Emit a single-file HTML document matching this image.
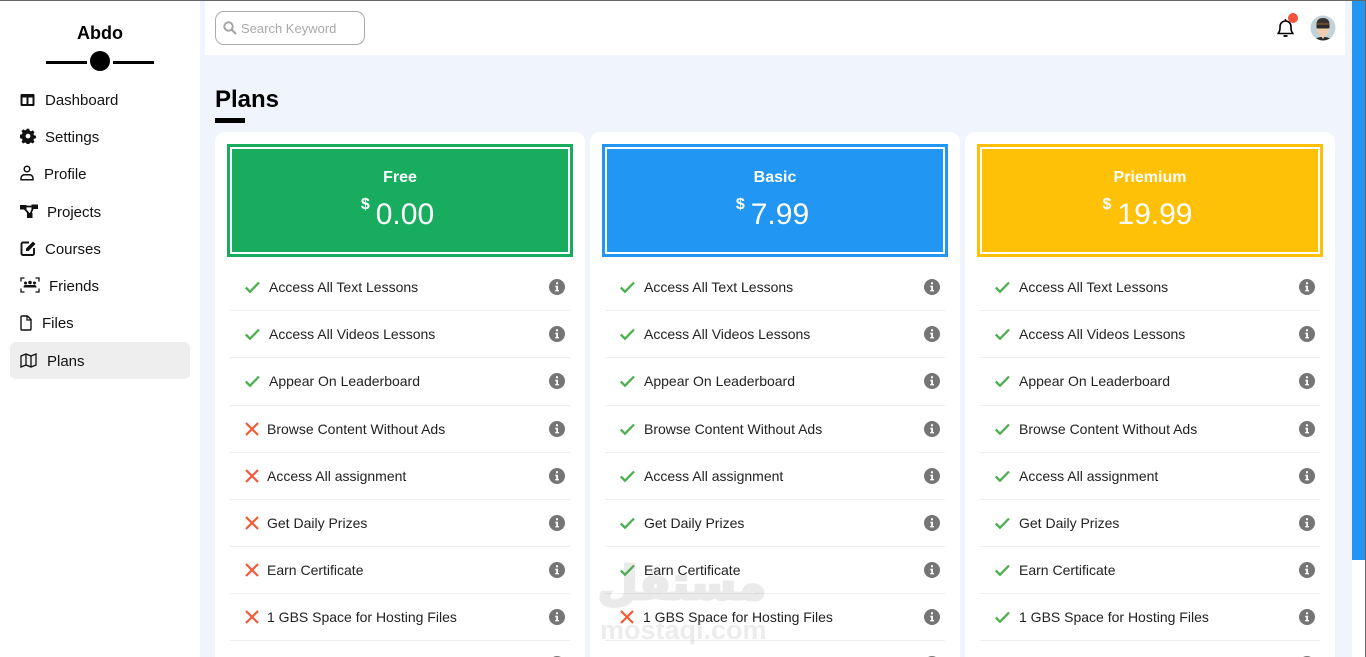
<!DOCTYPE html>
<html><head><meta charset="utf-8"><title>Plans</title>
<style>
*{box-sizing:border-box}
html,body{margin:0;padding:0;width:1366px;height:657px;overflow:hidden}
body{position:relative;background:#f0f4fd;font-family:"Liberation Sans",sans-serif;color:#111}
.a{position:absolute}
.nav{position:absolute;font-size:15px;line-height:18px;white-space:nowrap;color:#111}
.ni{position:absolute;left:20px}
.card{position:absolute;top:132px;width:370px;height:525px;background:#fff;border-radius:10px 10px 0 0;overflow:hidden}
.head{position:absolute;left:12px;top:12px;width:346px;height:113px;border:3px solid}
.head i{position:absolute;left:0;top:0;right:0;bottom:0;border:2px solid #fff;display:block}
.t{position:absolute;left:0;width:100%;top:21px;text-align:center;color:#fff;font-weight:bold;font-size:16px;line-height:20px}
.p{position:absolute;left:0;width:100%;top:50px;padding-right:5px;text-align:center;color:#fff;font-size:30px;line-height:36px;white-space:nowrap}
.p sup{font-size:16px;font-weight:bold;position:relative;top:-15px;vertical-align:baseline;margin-right:6px;line-height:0}
.sep{position:absolute;left:15px;width:340px;height:1px;background:#eee}
.r{position:absolute;font-size:14px;line-height:18px;white-space:nowrap;color:#222}
.ic{position:absolute;left:29px;width:16px;height:16px}
.in{position:absolute;left:334px;width:16px;height:16px}
</style></head><body>
<svg width="0" height="0" style="position:absolute">
<symbol id="ck" viewBox="0 0 16 16"><path d="M1.800 8.500 6 12.700 15 3.500" fill="none" stroke="#4caf50" stroke-width="2.300"/></symbol>
<symbol id="xx" viewBox="0 0 16 16"><path d="M2 2 14 14M14 2 2 14" fill="none" stroke="#f4593a" stroke-width="2.200"/></symbol>
<symbol id="inf" viewBox="0 0 16 16"><circle cx="8" cy="8" r="8" fill="#757575"/><path d="M7 3.200h2v2H7zM6.300 6.800H9v4.200h1v1.400H6.200V11h1V8.200h-.9z" fill="#fff"/></symbol>
</svg>

<!-- sidebar -->
<div class="a" style="left:0;top:0;width:200px;height:657px;background:#fff"></div>
<div class="a" style="left:0;top:23px;width:200px;text-align:center;font-weight:bold;font-size:18px;line-height:21px;color:#000">Abdo</div>
<div class="a" style="left:46px;top:61px;width:41px;height:3px;background:#000"></div>
<div class="a" style="left:113px;top:61px;width:41px;height:3px;background:#000"></div>
<div class="a" style="left:90px;top:51px;width:20px;height:20px;border-radius:50%;background:#000"></div>
<div class="a" style="left:10px;top:342px;width:180px;height:37px;background:#eee;border-radius:6px"></div>

<svg class="ni" style="top:92px" width="16" height="16" viewBox="0 0 16 16"><path d="M1.500 2h12a1 1 0 0 1 1 1v10a1 1 0 0 1-1 1h-12a1 1 0 0 1-1-1V3a1 1 0 0 1 1-1zM2.500 5.500v6.500h4V5.500zM8.500 5.500v6.500h4V5.500z" fill="#111" fill-rule="evenodd"/></svg>
<div class="nav" style="left:45px;top:92px">Dashboard</div>
<svg class="ni" style="top:128px" width="16" height="16" viewBox="0 0 16 16"><path d="M6.800.8h2.400l.5 2 1.300.6 1.800-1 1.700 1.700-1 1.800.5 1.300 2 .5v2.500l-2 .5-.5 1.300 1 1.800-1.700 1.700-1.800-1-1.300.5-.5 2H6.800l-.5-2-1.300-.5-1.800 1-1.700-1.700 1-1.800-.5-1.300-2-.5V6.700l2-.5.500-1.300-1-1.800 1.700-1.700 1.800 1 1.300-.6zM8 5.700a2.400 2.400 0 1 0 0 4.800 2.400 2.400 0 0 0 0-4.800z" fill="#111" fill-rule="evenodd"/></svg>
<div class="nav" style="left:45px;top:129px">Settings</div>
<svg class="ni" style="top:165px" width="14" height="16" viewBox="0 0 14 16"><circle cx="7" cy="4" r="2.800" fill="none" stroke="#111" stroke-width="1.500"/><path d="M1 14.800v-1.500a3.500 3.500 0 0 1 3.500-3.500h5a3.500 3.500 0 0 1 3.500 3.500v1.500z" fill="none" stroke="#111" stroke-width="1.500"/></svg>
<div class="nav" style="left:44px;top:166px">Profile</div>
<svg class="ni" style="top:203px" width="18" height="16" viewBox="0 0 18 16"><path d="M0 2h6.500v4.500H0zM11.500 1.500H18v4.500h-6.500zM7 10h5.500v5H7z" fill="#111"/><path d="M5 3.500h8M4 5l6 7M13 5l-3 7" stroke="#111" stroke-width="1.800" fill="none"/></svg>
<div class="nav" style="left:47px;top:204px">Projects</div>
<svg class="ni" style="top:240px" width="17" height="16" viewBox="0 0 17 16"><path d="M9 2.500H3A1.500 1.500 0 0 0 1.500 4v9.500A1.500 1.500 0 0 0 3 15h9.500a1.500 1.500 0 0 0 1.500-1.500V8" fill="none" stroke="#111" stroke-width="1.900"/><path d="M6 8.500 13 1.500l2.500 2.500-7 7H6z" fill="#111"/></svg>
<div class="nav" style="left:45px;top:241px">Courses</div>
<svg class="ni" style="top:277px" width="20" height="16" viewBox="0 0 20 16"><path d="M1 4.500V1h3.500M15.500 1H19v3.500M1 11.500V15h3.500M15.500 15H19v-3.500" fill="none" stroke="#111" stroke-width="1.300"/><circle cx="5.500" cy="6" r="1.500" fill="#111"/><circle cx="10" cy="5.500" r="1.800" fill="#111"/><circle cx="14.500" cy="6" r="1.500" fill="#111"/><path d="M3.500 10.500c0-2 1-2.500 2-2.500h9c1 0 2 .5 2 2.500z" fill="#111"/></svg>
<div class="nav" style="left:49px;top:278px">Friends</div>
<svg class="ni" style="top:315px" width="12" height="16" viewBox="0 0 12 16"><path d="M1 2a1 1 0 0 1 1-1h5.500L11 4.500V14a1 1 0 0 1-1 1H2a1 1 0 0 1-1-1z" fill="none" stroke="#111" stroke-width="1.400"/><path d="M7 1v4h4" fill="none" stroke="#111" stroke-width="1.200"/></svg>
<div class="nav" style="left:42px;top:315px">Files</div>
<svg class="ni" style="top:353px" width="17" height="15" viewBox="0 0 17 15"><path d="M1 3l5-2 5 2 5-2v11l-5 2-5-2-5 2zM6 1v11M11 3v11" fill="none" stroke="#111" stroke-width="1.300"/></svg>
<div class="nav" style="left:47px;top:353px">Plans</div>

<!-- header -->
<div class="a" style="left:205px;top:0;width:1140px;height:55px;background:#fff"></div>
<div class="a" style="left:215px;top:11px;width:150px;height:34px;border:1px solid #aaa;border-radius:9px;background:#fff"></div>
<svg class="a" style="left:223px;top:21px" width="14" height="14" viewBox="0 0 14 14"><circle cx="5.500" cy="5.500" r="4.200" fill="none" stroke="#a5a5a5" stroke-width="2"/><path d="M8.800 8.800 13 13" stroke="#a5a5a5" stroke-width="2.200"/></svg>
<div class="a" style="left:241px;top:21px;font-size:13px;line-height:16px;color:#a9a9a9;white-space:nowrap">Search Keyword</div>
<svg class="a" style="left:1276px;top:18px" width="19" height="20" viewBox="0 0 19 20"><path d="M2 15.500c1.500-1.500 2-3 2-5.500V8.500a5.500 5.500 0 0 1 11 0V10c0 2.500.5 4 2 5.500z" fill="none" stroke="#000" stroke-width="1.600" stroke-linejoin="round"/><path d="M7.500 18h4" stroke="#000" stroke-width="1.800"/><path d="M9.500 1v2" stroke="#000" stroke-width="1.500"/></svg>
<div class="a" style="left:1288px;top:13px;width:10px;height:10px;border-radius:50%;background:#f4523b"></div>
<svg class="a" style="left:1310px;top:15px" width="26" height="26" viewBox="0 0 26 26"><defs><clipPath id="av"><circle cx="13" cy="13" r="12.500"/></clipPath></defs><g clip-path="url(#av)"><rect width="26" height="26" fill="#c0d3d8"/><path d="M4 26c1-3 5-4 9-4s8 1 9 4z" fill="#2c2a2a"/><path d="M10.500 20h5l-2.500 4z" fill="#f2dcc4"/><ellipse cx="13" cy="14" rx="6" ry="8" fill="#f3cdb0"/><path d="M6.500 11C6 5 9 3 13 3s7 2 6.500 8l-1-2h-11z" fill="#3a3331"/><rect x="6.500" y="9" width="13" height="4.500" rx="1" fill="#2b2b2b"/><path d="M6 9h14" stroke="#c9772b" stroke-width=".8"/></g></svg>

<!-- title -->
<div class="a" style="left:215px;top:85px;font-weight:bold;font-size:24px;line-height:30px;color:#000">Plans</div>
<div class="a" style="left:215px;top:118px;width:30px;height:5px;background:#000"></div>

<!-- card 1 -->
<div class="card" style="left:215px">
<div class="head" style="background:#18ad5e;border-color:#18ad5e"><i></i><div class="t">Free</div><div class="p"><sup>$</sup>0.00</div></div>
<div class="sep" style="top:178px"></div><div class="sep" style="top:225px"></div><div class="sep" style="top:273px"></div><div class="sep" style="top:320px"></div><div class="sep" style="top:367px"></div><div class="sep" style="top:414px"></div><div class="sep" style="top:461px"></div><div class="sep" style="top:508px"></div>
<svg class="ic" style="top:147px"><use href="#ck"/></svg><div class="r" style="left:54px;top:146px">Access All Text Lessons</div><svg class="in" style="top:147px"><use href="#inf"/></svg>
<svg class="ic" style="top:194px"><use href="#ck"/></svg><div class="r" style="left:54px;top:193px">Access All Videos Lessons</div><svg class="in" style="top:194px"><use href="#inf"/></svg>
<svg class="ic" style="top:241px"><use href="#ck"/></svg><div class="r" style="left:54px;top:240px">Appear On Leaderboard</div><svg class="in" style="top:241px"><use href="#inf"/></svg>
<svg class="ic" style="top:289px"><use href="#xx"/></svg><div class="r" style="left:52px;top:288px">Browse Content Without Ads</div><svg class="in" style="top:289px"><use href="#inf"/></svg>
<svg class="ic" style="top:336px"><use href="#xx"/></svg><div class="r" style="left:52px;top:335px">Access All assignment</div><svg class="in" style="top:336px"><use href="#inf"/></svg>
<svg class="ic" style="top:383px"><use href="#xx"/></svg><div class="r" style="left:52px;top:382px">Get Daily Prizes</div><svg class="in" style="top:383px"><use href="#inf"/></svg>
<svg class="ic" style="top:430px"><use href="#xx"/></svg><div class="r" style="left:52px;top:429px">Earn Certificate</div><svg class="in" style="top:430px"><use href="#inf"/></svg>
<svg class="ic" style="top:477px"><use href="#xx"/></svg><div class="r" style="left:52px;top:476px">1 GBS Space for Hosting Files</div><svg class="in" style="top:477px"><use href="#inf"/></svg>
<svg class="in" style="top:524px"><use href="#inf"/></svg>
</div>

<!-- card 2 -->
<div class="card" style="left:590px">
<div class="head" style="background:#2196f3;border-color:#2196f3"><i></i><div class="t">Basic</div><div class="p"><sup>$</sup>7.99</div></div>
<div class="sep" style="top:178px"></div><div class="sep" style="top:225px"></div><div class="sep" style="top:273px"></div><div class="sep" style="top:320px"></div><div class="sep" style="top:367px"></div><div class="sep" style="top:414px"></div><div class="sep" style="top:461px"></div><div class="sep" style="top:508px"></div>
<svg class="ic" style="top:147px"><use href="#ck"/></svg><div class="r" style="left:54px;top:146px">Access All Text Lessons</div><svg class="in" style="top:147px"><use href="#inf"/></svg>
<svg class="ic" style="top:194px"><use href="#ck"/></svg><div class="r" style="left:54px;top:193px">Access All Videos Lessons</div><svg class="in" style="top:194px"><use href="#inf"/></svg>
<svg class="ic" style="top:241px"><use href="#ck"/></svg><div class="r" style="left:54px;top:240px">Appear On Leaderboard</div><svg class="in" style="top:241px"><use href="#inf"/></svg>
<svg class="ic" style="top:289px"><use href="#ck"/></svg><div class="r" style="left:54px;top:288px">Browse Content Without Ads</div><svg class="in" style="top:289px"><use href="#inf"/></svg>
<svg class="ic" style="top:336px"><use href="#ck"/></svg><div class="r" style="left:54px;top:335px">Access All assignment</div><svg class="in" style="top:336px"><use href="#inf"/></svg>
<svg class="ic" style="top:383px"><use href="#ck"/></svg><div class="r" style="left:54px;top:382px">Get Daily Prizes</div><svg class="in" style="top:383px"><use href="#inf"/></svg>
<svg class="ic" style="top:430px"><use href="#ck"/></svg><div class="r" style="left:54px;top:429px">Earn Certificate</div><svg class="in" style="top:430px"><use href="#inf"/></svg>
<svg class="ic" style="top:477px"><use href="#xx"/></svg><div class="r" style="left:53px;top:476px">1 GBS Space for Hosting Files</div><svg class="in" style="top:477px"><use href="#inf"/></svg>
<svg class="in" style="top:524px"><use href="#inf"/></svg>
</div>

<!-- card 3 -->
<div class="card" style="left:965px">
<div class="head" style="background:#ffc107;border-color:#ffc107"><i></i><div class="t">Priemium</div><div class="p"><sup>$</sup>19.99</div></div>
<div class="sep" style="top:178px"></div><div class="sep" style="top:225px"></div><div class="sep" style="top:273px"></div><div class="sep" style="top:320px"></div><div class="sep" style="top:367px"></div><div class="sep" style="top:414px"></div><div class="sep" style="top:461px"></div><div class="sep" style="top:508px"></div>
<svg class="ic" style="top:147px"><use href="#ck"/></svg><div class="r" style="left:54px;top:146px">Access All Text Lessons</div><svg class="in" style="top:147px"><use href="#inf"/></svg>
<svg class="ic" style="top:194px"><use href="#ck"/></svg><div class="r" style="left:54px;top:193px">Access All Videos Lessons</div><svg class="in" style="top:194px"><use href="#inf"/></svg>
<svg class="ic" style="top:241px"><use href="#ck"/></svg><div class="r" style="left:54px;top:240px">Appear On Leaderboard</div><svg class="in" style="top:241px"><use href="#inf"/></svg>
<svg class="ic" style="top:289px"><use href="#ck"/></svg><div class="r" style="left:54px;top:288px">Browse Content Without Ads</div><svg class="in" style="top:289px"><use href="#inf"/></svg>
<svg class="ic" style="top:336px"><use href="#ck"/></svg><div class="r" style="left:54px;top:335px">Access All assignment</div><svg class="in" style="top:336px"><use href="#inf"/></svg>
<svg class="ic" style="top:383px"><use href="#ck"/></svg><div class="r" style="left:54px;top:382px">Get Daily Prizes</div><svg class="in" style="top:383px"><use href="#inf"/></svg>
<svg class="ic" style="top:430px"><use href="#ck"/></svg><div class="r" style="left:54px;top:429px">Earn Certificate</div><svg class="in" style="top:430px"><use href="#inf"/></svg>
<svg class="ic" style="top:477px"><use href="#ck"/></svg><div class="r" style="left:54px;top:476px">1 GBS Space for Hosting Files</div><svg class="in" style="top:477px"><use href="#inf"/></svg>
<svg class="in" style="top:524px"><use href="#inf"/></svg>
</div>

<!-- watermark -->
<div class="a" style="left:602px;top:553px;width:164px;text-align:center;font-family:'DejaVu Sans',sans-serif;font-weight:bold;font-size:46px;line-height:60px;color:#888;-webkit-text-stroke:3px #888;opacity:.17;white-space:nowrap" dir="rtl">مستقل</div>
<div class="a" style="left:600px;top:616px;font-weight:bold;font-size:27px;line-height:28px;color:#888;opacity:.15;white-space:nowrap">mostaql.com</div>

<!-- scrollbar + frame -->
<div class="a" style="left:1352px;top:0;width:13px;height:657px;background:#fff"></div>
<div class="a" style="left:1352px;top:0;width:13px;height:560px;background:#2196f3"></div>
<div class="a" style="left:1365px;top:0;width:1px;height:657px;background:#666"></div>
<div class="a" style="left:0;top:0;width:1366px;height:1px;background:#666"></div>
</body></html>
